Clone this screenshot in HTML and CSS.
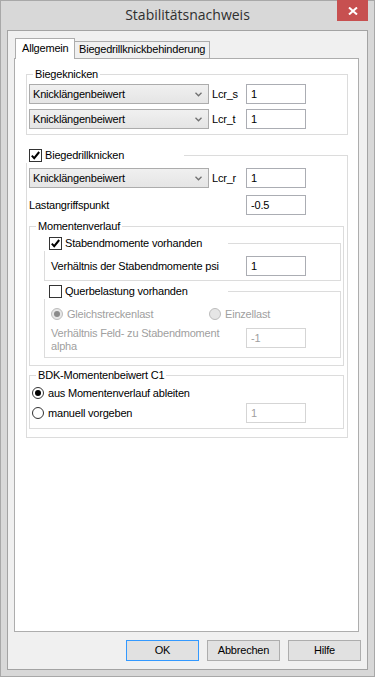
FILE: index.html
```html
<!DOCTYPE html>
<html>
<head>
<meta charset="utf-8">
<link rel="stylesheet" href="styles.css">
</head>
<body>
<div class="window">
  <div class="titlebar">
    <div></div>
    <div class="title">Stabilitätsnachweis</div>
    <div class="close"><svg width="10" height="8" viewBox="0 0 10 8"><path d="M1 0.5 L9 7.5 M9 0.5 L1 7.5" stroke="#fff" stroke-width="2" fill="none"/></svg></div>
  </div>
  <div class="client">
    <div class="tabs">
      <div class="tab active">Allgemein</div>
      <div class="tab inactive">Biegedrillknickbehinderung</div>
    </div>
    <div class="panel">
      <div class="group g-biege">
        <div class="legend">Biegeknicken</div>
        <div class="row">
          <div class="combo"><span>Knicklängenbeiwert</span><svg class="chev" width="7" height="5" viewBox="0 0 7 5"><path d="M0.5 0.8 L3.5 3.8 L6.5 0.8" stroke="#707070" stroke-width="1.3" fill="none"/></svg></div>
          <span class="lbl">Lcr_s</span>
          <div class="input">1</div>
        </div>
        <div class="row">
          <div class="combo"><span>Knicklängenbeiwert</span><svg class="chev" width="7" height="5" viewBox="0 0 7 5"><path d="M0.5 0.8 L3.5 3.8 L6.5 0.8" stroke="#707070" stroke-width="1.3" fill="none"/></svg></div>
          <span class="lbl">Lcr_t</span>
          <div class="input">1</div>
        </div>
      </div>

      <div class="group g-bdk-outer">
        <div class="legend check-legend wide">
          <span class="checkbox checked"><svg width="11" height="11" viewBox="0 0 11 11"><path d="M1.8 5.6 L4.2 8.2 L9.2 2" stroke="#000" stroke-width="2" fill="none"/></svg></span>
          <span>Biegedrillknicken</span>
        </div>
        <div class="row">
          <div class="combo"><span>Knicklängenbeiwert</span><svg class="chev" width="7" height="5" viewBox="0 0 7 5"><path d="M0.5 0.8 L3.5 3.8 L6.5 0.8" stroke="#707070" stroke-width="1.3" fill="none"/></svg></div>
          <span class="lbl">Lcr_r</span>
          <div class="input">1</div>
        </div>
        <div class="row row-last">
          <span class="lbl-long">Lastangriffspunkt</span>
          <div class="input">-0.5</div>
        </div>

        <div class="group g-moment">
          <div class="legend plain">Momentenverlauf</div>
          <div class="group g-inner g-stab">
            <div class="legend check-legend inner">
              <span class="checkbox checked"><svg width="11" height="11" viewBox="0 0 11 11"><path d="M1.8 5.6 L4.2 8.2 L9.2 2" stroke="#000" stroke-width="2" fill="none"/></svg></span>
              <span>Stabendmomente vorhanden</span>
            </div>
            <div class="row">
              <span class="lbl-inner">Verhältnis der Stabendmomente psi</span>
              <div class="input">1</div>
            </div>
          </div>
          <div class="group g-inner g-quer">
            <div class="legend check-legend inner">
              <span class="checkbox"></span>
              <span>Querbelastung vorhanden</span>
            </div>
            <div class="radio-row">
              <div class="opt opt-first"><span class="radio disabled sel"></span><span class="dis">Gleichstreckenlast</span></div>
              <div class="opt"><span class="radio disabled"></span><span class="dis">Einzellast</span></div>
            </div>
            <div class="alpha-row">
              <span class="lbl-inner dis">Verhältnis Feld- zu Stabendmoment alpha</span>
              <div class="input disabled-input">-1</div>
            </div>
          </div>
        </div>

        <div class="group g-c1">
          <div class="legend plain">BDK-Momentenbeiwert C1</div>
          <div class="c1-row">
            <div class="opt"><span class="radio sel"></span><span>aus Momentenverlauf ableiten</span></div>
          </div>
          <div class="c1-row">
            <div class="opt opt-wide"><span class="radio"></span><span>manuell vorgeben</span></div>
            <div class="input disabled-input">1</div>
          </div>
        </div>
      </div>
    </div>
    <div class="buttons">
      <div class="btn default">OK</div>
      <div class="btn">Abbrechen</div>
      <div class="btn">Hilfe</div>
    </div>
  </div>
</div>
</body>
</html>
```

FILE: styles.css
```css
* { box-sizing: border-box; }

body {
  margin: 0;
  font-family: "Liberation Sans", Arial, sans-serif;
  font-size: 11px;
  letter-spacing: -0.2px;
  color: #000;
  background: #fff;
}

.window {
  width: 375px;
  height: 677px;
  background: #d8d8d8;
  border: 1px solid #a8a8a8;
  display: flex;
  flex-direction: column;
}

.titlebar {
  height: 29px;
  display: grid;
  grid-template-columns: 1fr auto 1fr;
}

.title {
  font-family: "Open Sans", "Noto Sans", sans-serif;
  font-size: 14px;
  letter-spacing: 0;
  color: #2f2f2f;
  line-height: 28px;
}

.close {
  justify-self: end;
  margin-top: -1px;
  margin-right: 6px;
  width: 31px;
  height: 21px;
  background: #c75050;
  display: flex;
  align-items: center;
  justify-content: center;
}

.client {
  margin: 0 6px;
  height: 640px;
  border: 1px solid #a3a3a3;
  background: #f0f0f0;
  padding: 7px 0 0 6px;
}

.tabs {
  display: flex;
  align-items: flex-end;
  height: 21px;
  margin-bottom: -1px;
  position: relative;
  z-index: 1;
}

.tab {
  border: 1px solid #adadad;
  border-bottom: none;
}

.tab.active {
  margin-left: 1px;
  width: 60px;
  height: 21px;
  background: #fff;
  padding-left: 6px;
  line-height: 18px;
  position: relative;
  z-index: 2;
}

.tab.inactive {
  margin-left: -1px;
  margin-bottom: 1px;
  width: 136px;
  height: 17px;
  background: #f0f0f0;
  padding-left: 4px;
  line-height: 15px;
}

.panel {
  width: 345px;
  height: 574px;
  border: 1px solid #adadad;
  background: #fff;
  display: flow-root;
}

.group {
  border: 1px solid #dcdcdc;
  position: relative;
}

.legend {
  position: absolute;
  background: #fff;
  line-height: 13px;
  white-space: nowrap;
}

.legend.plain {
  top: -7px;
  left: 6px;
  padding: 0 2px;
}

.g-biege .legend {
  top: -7px;
  left: 6px;
  padding: 0 2px;
}

.check-legend {
  display: flex;
  align-items: center;
  gap: 3px;
  height: 15px;
  top: -8px;
  left: -1px;
}

.check-legend.wide { width: 158px; padding-left: 3px; }
.check-legend.inner { width: 184px; padding-left: 5px; }

.checkbox {
  width: 13px;
  height: 13px;
  border: 1px solid #333;
  background: #fff;
  display: flex;
  align-items: center;
  justify-content: center;
  flex: none;
}

.g-biege {
  margin: 15px 0 0 11px;
  width: 322px;
  height: 61px;
  padding: 9px 0 0 2px;
  display: flex;
  flex-direction: column;
  gap: 5px;
}

.row {
  display: flex;
  align-items: center;
  height: 20px;
}

.combo {
  width: 180px;
  height: 20px;
  border: 1px solid #acacac;
  background: linear-gradient(#f0f0f0, #e5e5e5);
  padding: 0 6px 0 3px;
  display: flex;
  align-items: center;
  justify-content: space-between;
  flex: none;
}

.chev { display: block; }

.lbl {
  margin-left: 3px;
  width: 34px;
  flex: none;
}

.lbl-long {
  width: 217px;
  flex: none;
}

.input {
  width: 60px;
  height: 20px;
  border: 1px solid #abadb3;
  background: #fff;
  padding-left: 4px;
  line-height: 18px;
  flex: none;
}

.disabled-input {
  border-color: #d5d5d5;
  color: #a0a0a0;
}

.dis { color: #a0a0a0; }

.g-bdk-outer {
  margin: 20px 0 0 11px;
  width: 322px;
  height: 283px;
  padding: 12px 0 0 2px;
}

.row-last { margin-top: 7px; }

.g-moment {
  margin-top: 11px;
  width: 315px;
  height: 140px;
  padding: 0 0 0 14px;
  display: flow-root;
}

.g-inner {
  width: 297px;
  padding-left: 6px;
}

.g-stab {
  margin-top: 16px;
  height: 38px;
  padding-top: 12px;
}

.lbl-inner {
  width: 195px;
  flex: none;
}

.g-quer {
  margin-top: 10px;
  height: 67px;
  padding-top: 15px;
}

.radio-row {
  display: flex;
  align-items: center;
  height: 13px;
}

.opt {
  display: flex;
  align-items: center;
  gap: 4px;
}

.opt-first { width: 158px; flex: none; }

.radio {
  width: 12px;
  height: 12px;
  border-radius: 50%;
  border: 1px solid #333;
  background: #fff;
  display: flex;
  align-items: center;
  justify-content: center;
  flex: none;
}

.radio.sel::after {
  content: "";
  width: 6px;
  height: 6px;
  border-radius: 50%;
  background: #000;
}

.radio.disabled {
  border-color: #bcbcbc;
  background: #e6e6e6;
}

.radio.disabled.sel::after { background: #8a8a8a; }

.alpha-row {
  margin-top: 7px;
  display: flex;
  align-items: flex-start;
}

.alpha-row .lbl-inner { line-height: 13px; }
.alpha-row .input { margin-top: 1px; }

.g-c1 {
  margin-top: 9px;
  width: 315px;
  height: 54px;
  padding: 7px 0 0 2px;
}

.c1-row {
  display: flex;
  align-items: center;
  height: 20px;
}

.opt-wide { width: 214px; flex: none; }

.buttons {
  display: flex;
  justify-content: flex-end;
  gap: 8px;
  margin-top: 8px;
  padding-right: 6px;
}

.btn {
  width: 73px;
  height: 21px;
  background: #e1e1e1;
  border: 1px solid #adadad;
  text-align: center;
  line-height: 19px;
}

.btn.default { border-color: #3399ff; }
```
